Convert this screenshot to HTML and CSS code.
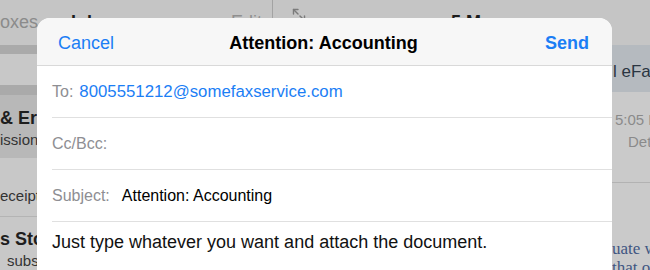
FILE: index.html
```html
<!DOCTYPE html>
<html lang="en">
<head>
<meta charset="utf-8">
<title>Compose</title>
<link rel="stylesheet" href="styles.css">
</head>
<body>
<div class="screen">
  <div class="master">
    <div class="nav">
      <span class="nav-back">oxes</span>
      <span class="nav-title">Inbox</span>
      <span class="nav-edit">Edit</span>
    </div>
    <div class="band"></div>
    <div class="search-area"></div>
    <div class="band band-low"></div>
    <div class="mail-row selected">
      <div class="mail-from">&amp; Eric Stanton</div>
      <div class="mail-sub">ission for the order</div>
    </div>
    <div class="mail-row plain">
      <div class="mail-sub">eceipt from your order</div>
    </div>
    <div class="mail-row last">
      <div class="mail-from">s Store</div>
      <div class="mail-sub indent">subscription</div>
    </div>
  </div>
  <div class="detail">
    <div class="nav detail-nav">
      <svg class="expand" width="14" height="14" viewBox="0 0 14 14" fill="none" stroke="#7b7b7b" stroke-width="1.4" stroke-linecap="round" stroke-linejoin="round">
        <path d="M1.5 1.5 L6 6"/>
        <path d="M1.5 6 V1.5 H6"/>
        <path d="M12.5 12.5 L8 8"/>
        <path d="M12.5 8 V12.5 H8"/>
      </svg>
      <span class="nav-title">5 Messages</span>
    </div>
    <div class="subject-band">l eFax Message</div>
    <div class="meta">
      <span class="meta-time">5:05 PM</span>
      <span class="meta-details">Details</span>
    </div>
    <div class="message">
      <p>uate with</p>
      <p>that of</p>
    </div>
  </div>

  <div class="sheet">
    <div class="sheet-head">
      <span class="btn-cancel">Cancel</span>
      <span class="sheet-title">Attention: Accounting</span>
      <span class="btn-send">Send</span>
    </div>
    <div class="field">
      <span class="label">To:</span>
      <span class="recipient">8005551212@somefaxservice.com</span>
    </div>
    <div class="field">
      <span class="label">Cc/Bcc:</span>
    </div>
    <div class="field">
      <span class="label">Subject:</span>
      <span class="subject-value">Attention: Accounting</span>
    </div>
    <div class="body-text">Just type whatever you want and attach the document.</div>
  </div>
</div>
</body>
</html>
```

FILE: styles.css
```css
* { box-sizing: border-box; }

html, body {
  margin: 0;
  padding: 0;
  background: #c6c6c6;
}

body {
  font-family: "Liberation Sans", Arial, sans-serif;
  width: 650px;
  height: 270px;
  overflow: hidden;
}

.screen {
  position: relative;
  display: flex;
  width: 650px;
  height: 270px;
  overflow: hidden;
  background: #c6c6c6;
}

/* ---------- master (inbox) column ---------- */
.master {
  width: 273px;
  flex: none;
  border-right: 1px solid #a3a3a3;
  display: flex;
  flex-direction: column;
  background: #c8c8c8;
}

.nav {
  height: 45px;
  flex: none;
  display: flex;
  align-items: flex-start;
  padding-top: 11px;
  background: #c5c5c5;
  font-size: 18px;
  line-height: 22px;
}

.nav-back {
  color: #8b8b8b;
  font-size: 18px;
}

.nav-title {
  font-weight: 700;
  color: #1c1c1c;
}

.master .nav-title { margin-left: 33px; }

.nav-edit {
  margin-left: auto;
  margin-right: 10px;
  color: #8f8f8f;
}

.band {
  height: 9px;
  flex: none;
  background: #aaaaaa;
}

.band-low { height: 10px; }

.search-area {
  height: 31px;
  flex: none;
  background: #c8c8c8;
}

.mail-row {
  flex: none;
  display: flex;
  flex-direction: column;
}

.mail-row.selected {
  height: 63px;
  background: #b8b8b8;
  padding-top: 12px;
  gap: 2px;
}

.mail-row.plain {
  height: 59px;
  border-bottom: 1px solid #b4b4b4;
  padding-top: 29px;
}

.mail-row.last {
  padding-top: 11px;
  gap: 2px;
}

.mail-from {
  font-size: 18px;
  line-height: 22px;
  font-weight: 700;
  color: #1e1e1e;
  white-space: nowrap;
}

.mail-sub {
  font-size: 15px;
  line-height: 18px;
  color: #333333;
  white-space: nowrap;
}

.mail-sub.indent { padding-left: 7px; }

/* ---------- detail column ---------- */
.detail {
  flex: 1;
  display: flex;
  flex-direction: column;
  background: #cacaca;
  min-width: 0;
}

.detail-nav {
  padding-left: 19px;
  column-gap: 145px;
}

.expand { margin-top: -3px; flex: none; }

.subject-band {
  height: 47px;
  flex: none;
  background: #b5babf;
  padding-left: 340px;
  padding-top: 7px;
  display: flex;
  align-items: center;
  font-size: 17px;
  color: #2a3542;
  white-space: nowrap;
}

.meta {
  height: 91px;
  flex: none;
  border-bottom: 1px solid #b2b2b2;
  display: flex;
  flex-direction: column;
  padding-top: 19px;
  padding-left: 342px;
  gap: 4px;
  font-size: 15px;
  line-height: 18px;
  color: #8a8a8a;
  white-space: nowrap;
}

.meta-details { padding-left: 13px; }

.message {
  padding-top: 56px;
  padding-left: 339px;
  font-family: "Liberation Serif", "Times New Roman", serif;
  font-size: 17px;
  line-height: 19px;
  color: #3f5682;
  white-space: nowrap;
}

.message p { margin: 0; }

/* ---------- compose sheet (overlay) ---------- */
.sheet {
  position: absolute;
  top: 18px;
  left: 37px;
  width: 575px;
  bottom: 0;
  background: #ffffff;
  border-radius: 13px 13px 0 0;
  overflow: hidden;
}

.sheet-head {
  height: 48px;
  padding: 3px 23px 0 21px;
  display: grid;
  grid-template-columns: 1fr auto 1fr;
  align-items: center;
  background: #f7f7f7;
  border-bottom: 1px solid #d9d9d9;
  font-size: 18px;
}

.btn-cancel { color: #1b7ef5; }

.sheet-title {
  font-weight: 700;
  color: #000000;
}

.btn-send {
  justify-self: end;
  color: #1b7ef5;
  font-weight: 700;
}

.field {
  height: 52px;
  margin-left: 15px;
  border-bottom: 1px solid #e0e0e0;
  display: flex;
  align-items: center;
  gap: 6px;
  font-size: 16px;
}

.label { color: #8e8e93; }

.recipient {
  color: #1b7ef5;
  font-size: 16.8px;
}

.subject-value {
  margin-left: 6px;
  color: #000000;
}

.body-text {
  padding: 9px 0 0 15px;
  font-size: 18px;
  line-height: 22px;
  color: #111111;
}
```
